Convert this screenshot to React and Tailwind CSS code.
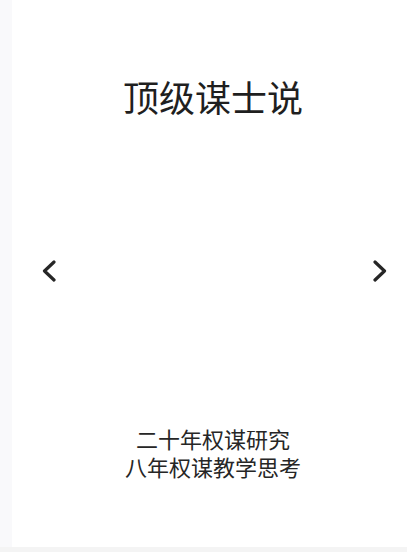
export default function App() {
  const font = { fontFamily: '"Noto Sans CJK SC", "Noto Sans", sans-serif' };
  return (
    <div className="w-[407px] h-[552px] flex flex-col bg-white overflow-hidden" style={font}>
      <div className="flex flex-1 min-h-0">
        <div className="w-[12px] bg-[#f9f9fb]" />
        <div className="flex-1 flex flex-col bg-white">
          <div className="h-[78px]" />
          <div className="h-[36px] flex justify-center pl-[7px] text-[36px] leading-[36px] text-[#1f1f1f]">
            顶级谋士说
          </div>
          <div className="h-[310px] pt-[3px] flex items-center justify-between pl-[29px] pr-[19px]">
            <svg width="16" height="22" viewBox="0 0 16 22" fill="none">
              <path d="M13 2 L3.5 11 L13 20" stroke="#262626" strokeWidth="3.2" strokeLinecap="round" strokeLinejoin="round" />
            </svg>
            <svg width="16" height="22" viewBox="0 0 16 22" fill="none">
              <path d="M3 2 L12.5 11 L3 20" stroke="#262626" strokeWidth="3.2" strokeLinecap="round" strokeLinejoin="round" />
            </svg>
          </div>
          <div className="flex flex-col items-center pl-[7px] text-[22px] leading-[28px] text-[#262626]">
            <div>二十年权谋研究</div>
            <div>八年权谋教学思考</div>
          </div>
          <div className="flex-1" />
        </div>
      </div>
      <div className="h-[5px] bg-[#f4f4f4]" />
    </div>
  );
}
